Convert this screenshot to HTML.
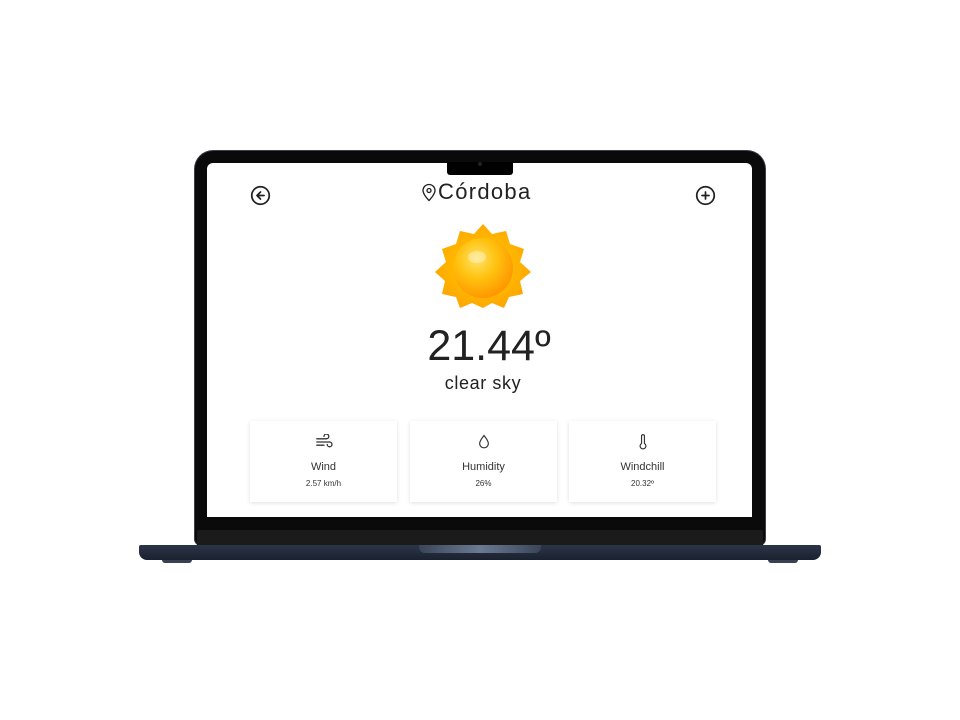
<!DOCTYPE html>
<html><head><style>
body{margin:0;width:960px;height:720px;background:#fff;position:relative;overflow:hidden;font-family:"Liberation Sans",sans-serif;color:#222}
.a{position:absolute}
.card{position:absolute;top:421px;width:147px;height:81px;background:#fff;box-shadow:0 1px 4px rgba(0,0,0,.12);text-align:center}
.card svg{margin-top:13px;display:block;margin-left:auto;margin-right:auto}
.card .t{font-size:11px;margin-top:11px;color:#333}
.card .v{font-size:8px;margin-top:6px;color:#333}
</style></head><body>
<div class="a" style="left:195px;top:151px;width:570px;height:394px;background:#0a0a0a;border-radius:18px 18px 6px 6px;box-shadow:0 0 0 1px #3a3f4a"></div>
<div class="a" style="left:207px;top:163px;width:545px;height:354px;background:#fff;border-radius:6px 6px 0 0"></div>
<div class="a" style="left:197px;top:530px;width:566px;height:15px;background:#1b1b1b"></div>
<div class="a" style="left:447px;top:162px;width:66px;height:13px;background:#000;border-radius:0 0 3px 3px"></div>
<div class="a" style="left:478px;top:162px;width:4px;height:4px;background:#222;border-radius:50%"></div>
<div class="a" style="left:139px;top:545px;width:682px;height:15px;background:linear-gradient(#2c3548,#1a2130);border-radius:2px 2px 8px 8px"></div>
<div class="a" style="left:419px;top:545px;width:122px;height:8px;background:linear-gradient(90deg,#3b4559,#6a7a93,#3b4559);border-radius:0 0 6px 6px"></div>
<div class="a" style="left:162px;top:560px;width:30px;height:3px;background:#3a4252;border-radius:0 0 3px 3px"></div>
<div class="a" style="left:768px;top:560px;width:30px;height:3px;background:#3a4252;border-radius:0 0 3px 3px"></div>

<svg class="a" style="left:250px;top:185px" width="21" height="21" viewBox="0 0 24 24" fill="none" stroke="#222" stroke-width="2" stroke-linecap="round" stroke-linejoin="round"><circle cx="12" cy="12" r="10"/><path d="M12 8l-4 4 4 4M16 12H8"/></svg>
<svg class="a" style="left:695px;top:185px" width="21" height="21" viewBox="0 0 24 24" fill="none" stroke="#222" stroke-width="2" stroke-linecap="round"><circle cx="12" cy="12" r="10"/><path d="M12 8v8M8 12h8"/></svg>
<svg class="a" style="left:421px;top:183px" width="16" height="19" viewBox="0 0 24 28" fill="none" stroke="#222" stroke-width="2"><path d="M12 26s9-9 9-15a9 9 0 0 0-18 0c0 6 9 15 9 15z"/><circle cx="12" cy="11" r="3"/></svg>
<div class="a" style="left:438px;top:179px;font-size:22px;letter-spacing:1.3px;color:#222">Córdoba</div>

<svg class="a" style="left:434px;top:224px" width="98" height="84" viewBox="0 0 98 84">
<defs><radialGradient id="g" cx="40%" cy="35%" r="65%"><stop offset="0" stop-color="#ffe36a"/><stop offset=".5" stop-color="#ffc20f"/><stop offset="1" stop-color="#ff9800"/></radialGradient>
<radialGradient id="s" cx="50%" cy="50%" r="60%"><stop offset="0" stop-color="#ffd000"/><stop offset="1" stop-color="#ffa000"/></radialGradient></defs>
<polygon fill="url(#s)" points="49,0 58,10 72,7 76,20 90,25 86,38 97,48 86,57 89,70 75,73 70,84 58,79 49,84 38,79 26,84 22,73 8,70 11,57 1,48 12,38 8,25 22,20 26,7 40,10"/>
<circle cx="49" cy="44" r="30" fill="url(#g)"/>
<ellipse cx="43" cy="33" rx="9" ry="6" fill="#fff" opacity=".35"/>
</svg>
<div class="a" style="left:0;width:978px;text-align:center;top:322px;font-size:43px;color:#222">21.44º</div>
<div class="a" style="left:0;width:966px;text-align:center;top:373px;font-size:18px;letter-spacing:0.6px;color:#222">clear sky</div>

<div class="card" style="left:250px"><svg width="20" height="16" viewBox="0 0 24 20" fill="none" stroke="#333" stroke-width="1.6" stroke-linecap="round"><path d="M3 6h12a3 3 0 1 0-3-3M3 10h16a3 3 0 1 1-3 3M3 14h9"/></svg><div class="t">Wind</div><div class="v">2.57 km/h</div></div>
<div class="card" style="left:410px"><svg width="16" height="16" viewBox="0 0 20 22" fill="none" stroke="#333" stroke-width="1.6"><path d="M10 2c4 5 6 8 6 11a6 6 0 0 1-12 0c0-3 2-6 6-11z"/></svg><div class="t">Humidity</div><div class="v">26%</div></div>
<div class="card" style="left:569px"><svg width="16" height="16" viewBox="0 0 20 22" fill="none" stroke="#333" stroke-width="1.6"><path d="M8 3a2 2 0 0 1 4 0v10a4 4 0 1 1-4 0z"/></svg><div class="t">Windchill</div><div class="v">20.32º</div></div>
</body></html>
